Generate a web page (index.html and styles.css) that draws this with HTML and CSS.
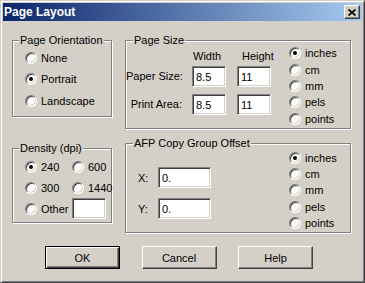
FILE: index.html
```html
<!DOCTYPE html>
<html lang="en">
<head>
  <meta charset="UTF-8">
  <title>Page Layout</title>
  <link rel="stylesheet" href="styles.css">
</head>
<body>

  <div class="window">
    <div class="titlebar">
      <span class="title">Page Layout</span>
      <button class="close-btn">
        <svg width="8" height="7" viewBox="0 0 8 7"><path d="M0.5 0.5 L7.5 6.5 M7.5 0.5 L0.5 6.5" stroke="#000" stroke-width="1.7" fill="none"/></svg>
      </button>
    </div>

    <div class="client">
      <div class="columns">
        <div class="col-left">
          <!-- Page orientation -->
          <div class="group orient">
            <div class="group-title">Page Orientation</div>
            <div class="orient-list">
              <label class="radio"><span class="circle"></span>None</label>
              <label class="radio on"><span class="circle"></span>Portrait</label>
              <label class="radio"><span class="circle"></span>Landscape</label>
            </div>
          </div>

          <!-- Density -->
          <div class="group density">
            <div class="group-title">Density (dpi)</div>
            <div class="density-grid">
              <label class="radio on"><span class="circle"></span>240</label>
              <label class="radio"><span class="circle"></span>600</label>
              <label class="radio"><span class="circle"></span>300</label>
              <label class="radio"><span class="circle"></span>1440</label>
              <label class="radio"><span class="circle"></span>Other</label>
              <input class="field other-field" type="text" value="">
            </div>
          </div>
        </div>

        <div class="col-right">
          <!-- Page size -->
          <div class="group page-size">
            <div class="group-title">Page Size</div>
            <div class="group-body">
              <div class="size-grid">
                <span></span>
                <span class="col-head head-w">Width</span>
                <span class="col-head head-h">Height</span>
                <span class="field-label">Paper Size:</span>
                <input class="field" type="text" value="8.5">
                <input class="field" type="text" value="11">
                <span class="field-label">Print Area:</span>
                <input class="field" type="text" value="8.5">
                <input class="field" type="text" value="11">
              </div>
              <div class="units size-units">
                <label class="radio on"><span class="circle"></span>inches</label>
                <label class="radio"><span class="circle"></span>cm</label>
                <label class="radio"><span class="circle"></span>mm</label>
                <label class="radio"><span class="circle"></span>pels</label>
                <label class="radio"><span class="circle"></span>points</label>
              </div>
            </div>
          </div>

          <!-- Copy group offset -->
          <div class="group offset">
            <div class="group-title">AFP Copy Group Offset</div>
            <div class="group-body">
              <div class="offset-grid">
                <span class="xy-label">X:</span>
                <input class="field wide" type="text" value="0.">
                <span class="xy-label">Y:</span>
                <input class="field wide" type="text" value="0.">
              </div>
              <div class="units offset-units">
                <label class="radio on"><span class="circle"></span>inches</label>
                <label class="radio"><span class="circle"></span>cm</label>
                <label class="radio"><span class="circle"></span>mm</label>
                <label class="radio"><span class="circle"></span>pels</label>
                <label class="radio"><span class="circle"></span>points</label>
              </div>
            </div>
          </div>
        </div>
      </div>

      <div class="buttons">
        <button class="btn default">OK</button>
        <button class="btn">Cancel</button>
        <button class="btn">Help</button>
      </div>
    </div>
  </div>

</body>
</html>
```

FILE: styles.css
```css
* {
  box-sizing: border-box;
}

body {
  margin: 0;
  font-family: "Liberation Sans", Arial, sans-serif;
  font-size: 11px;
  color: #000;
  background: #d4d0c8;
}

/* Window frame */
.window {
  width: 365px;
  height: 283px;
  background: #d4d0c8;
  border: 1px solid;
  border-color: #d4d0c8 #404040 #404040 #d4d0c8;
  box-shadow: inset 1px 1px #fff, inset -1px -1px #808080;
  padding: 2px;
}

.titlebar {
  height: 18px;
  display: flex;
  align-items: center;
  justify-content: space-between;
  background: linear-gradient(to right, #0a246a, #a6caf0);
  padding-left: 1px;
}

.title {
  color: #fff;
  font-weight: bold;
  font-size: 12px;
}

.close-btn {
  width: 16px;
  height: 14px;
  margin-right: 2px;
  padding: 0;
  display: flex;
  align-items: center;
  justify-content: center;
  background: #d4d0c8;
  border: 1px solid;
  border-color: #fff #404040 #404040 #fff;
  box-shadow: inset -1px -1px #808080;
}

/* Layout */
.columns {
  display: flex;
  margin: 19px 0 0 9px;
}

.col-left {
  width: 100px;
}

.col-right {
  width: 226px;
  margin-left: 13px;
}

/* Group boxes */
.group {
  border: 1px solid #808080;
  box-shadow: 1px 1px #fff, inset 1px 1px #fff;
}

.group-title {
  width: fit-content;
  background: #d4d0c8;
  padding: 0 1px;
  line-height: 12px;
  margin: -7px 0 -5px 6px;
  white-space: nowrap;
}

.col-right .group-title {
  margin-left: 7px;
}

.orient {
  height: 77px;
}

.density {
  height: 75px;
  margin-top: 31px;
}

.page-size {
  height: 89px;
}

.offset {
  height: 90px;
  margin-top: 14px;
}

.group-body {
  display: flex;
  align-items: flex-start;
}

/* Radio buttons */
.radio {
  display: flex;
  align-items: center;
  gap: 4px;
  white-space: nowrap;
}

.circle {
  position: relative;
  flex: none;
  width: 12px;
  height: 12px;
  border-radius: 50%;
  background: #fff;
  border: 1px solid;
  border-color: #808080 #fff #fff #808080;
  box-shadow: inset 1px 1px #404040, inset -1px -1px #d4d0c8;
}

.radio.on .circle::after {
  content: "";
  position: absolute;
  left: 3px;
  top: 3px;
  width: 4px;
  height: 4px;
  border-radius: 50%;
  background: #000;
}

.orient-list {
  padding: 6px 0 0 12px;
}

.orient-list .radio {
  height: 21.5px;
}

.density-grid {
  display: grid;
  grid-template-columns: 47px 37px;
  grid-auto-rows: 21px;
  align-items: center;
  padding: 7px 0 0 12px;
}

.other-field {
  width: 37px;
}

/* Text fields */
.field {
  width: 34px;
  height: 21px;
  margin: 0;
  padding: 0 3px;
  border: 1px solid;
  border-color: #808080 #fff #fff #808080;
  box-shadow: inset 1px 1px #404040, inset -1px -1px #d4d0c8;
  background: #fff;
  font-family: "Liberation Sans", Arial, sans-serif;
  font-size: 11px;
  color: #000;
  outline: none;
}

.field.wide {
  width: 53px;
}

/* Page size grid */
.size-grid {
  display: grid;
  grid-template-columns: 66px 45px 34px;
  grid-template-rows: 16px 28px 21px;
  margin-top: 9px;
}

.col-head {
  line-height: 12px;
  white-space: nowrap;
}

.head-w {
  padding-left: 1px;
}

.head-h {
  padding-left: 5px;
}

.field-label {
  text-align: right;
  padding-right: 10px;
  line-height: 21px;
  white-space: nowrap;
}

.units .radio {
  height: 16.4px;
}

.size-units {
  margin: 4px 0 0 18px;
}

/* Offset grid */
.offset-grid {
  display: grid;
  grid-template-columns: 20px 53px;
  grid-auto-rows: 21px;
  row-gap: 10px;
  align-items: center;
  margin: 23px 0 0 12px;
}

.offset-units {
  margin: 5.5px 0 0 78px;
}

/* Buttons */
.buttons {
  display: flex;
  gap: 21.5px;
  margin: 13px 0 0 42px;
}

.btn {
  width: 75px;
  height: 23px;
  padding: 0;
  background: #d4d0c8;
  border: 1px solid;
  border-color: #fff #404040 #404040 #fff;
  box-shadow: inset -1px -1px #808080;
  font-family: "Liberation Sans", Arial, sans-serif;
  font-size: 11px;
  color: #000;
}

.btn.default {
  border-color: #000;
  box-shadow: inset 1px 1px #fff, inset -1px -1px #404040, inset -2px -2px #808080;
}
```
